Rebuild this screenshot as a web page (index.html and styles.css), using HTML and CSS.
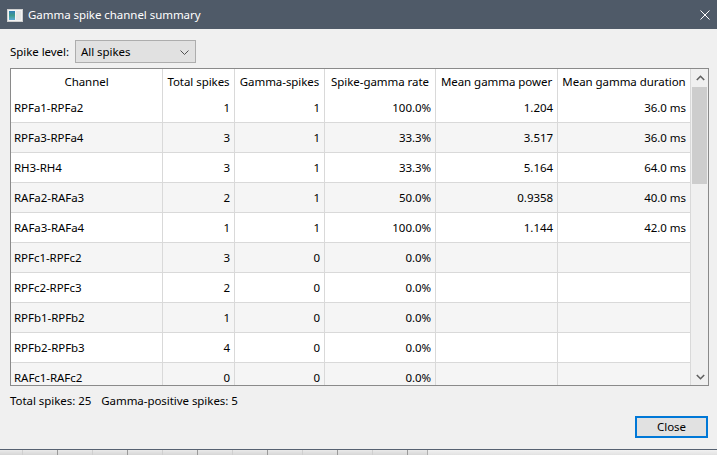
FILE: index.html
```html
<!DOCTYPE html>
<html lang="en">
<head>
<meta charset="utf-8">
<title>Gamma spike channel summary</title>
<link rel="stylesheet" href="styles.css">
</head>
<body>
<div class="window">
  <div class="titlebar">
    <svg class="app-icon" width="16" height="13" viewBox="0 0 16 13">
      <defs>
        <linearGradient id="g" x1="0" y1="0" x2="0" y2="1">
          <stop offset="0" stop-color="#2f7fb8"/>
          <stop offset="0.5" stop-color="#3f9a8c"/>
          <stop offset="1" stop-color="#5aa9d6"/>
        </linearGradient>
      </defs>
      <rect x="0.5" y="0.5" width="15" height="12" fill="#f4f4f4" stroke="#d0d0d0"/>
      <rect x="2" y="2" width="6" height="9" fill="url(#g)"/>
      <rect x="9" y="2" width="5" height="9" fill="#e6e6e6"/>
    </svg>
    <span class="title">Gamma spike channel summary</span>
    <svg class="close-x" width="10" height="10" viewBox="0 0 10 10">
      <path d="M0.5 0.5 L9.5 9.5 M9.5 0.5 L0.5 9.5" stroke="#ffffff" stroke-width="1"/>
    </svg>
  </div>
  <div class="content">
    <div class="toolbar">
      <span class="label">Spike level:</span>
      <div class="combo">
        <span>All spikes</span>
        <svg class="combo-chevron" width="9" height="5" viewBox="0 0 9 5">
          <path d="M0.5 0.5 L4.5 4.5 L8.5 0.5" fill="none" stroke="#505050" stroke-width="1"/>
        </svg>
      </div>
    </div>
    <div class="table-frame">
      <div class="table">
        <div class="row header">
          <div class="cell">Channel</div>
          <div class="cell">Total spikes</div>
          <div class="cell">Gamma-spikes</div>
          <div class="cell">Spike-gamma rate</div>
          <div class="cell">Mean gamma power</div>
          <div class="cell">Mean gamma duration</div>
        </div>
        <div class="row">
          <div class="cell name">RPFa1-RPFa2</div><div class="cell num">1</div><div class="cell num">1</div><div class="cell num">100.0%</div><div class="cell num">1.204</div><div class="cell num">36.0 ms</div>
        </div>
        <div class="row alt">
          <div class="cell name">RPFa3-RPFa4</div><div class="cell num">3</div><div class="cell num">1</div><div class="cell num">33.3%</div><div class="cell num">3.517</div><div class="cell num">36.0 ms</div>
        </div>
        <div class="row">
          <div class="cell name">RH3-RH4</div><div class="cell num">3</div><div class="cell num">1</div><div class="cell num">33.3%</div><div class="cell num">5.164</div><div class="cell num">64.0 ms</div>
        </div>
        <div class="row alt">
          <div class="cell name">RAFa2-RAFa3</div><div class="cell num">2</div><div class="cell num">1</div><div class="cell num">50.0%</div><div class="cell num">0.9358</div><div class="cell num">40.0 ms</div>
        </div>
        <div class="row">
          <div class="cell name">RAFa3-RAFa4</div><div class="cell num">1</div><div class="cell num">1</div><div class="cell num">100.0%</div><div class="cell num">1.144</div><div class="cell num">42.0 ms</div>
        </div>
        <div class="row alt">
          <div class="cell name">RPFc1-RPFc2</div><div class="cell num">3</div><div class="cell num">0</div><div class="cell num">0.0%</div><div class="cell num"></div><div class="cell num"></div>
        </div>
        <div class="row">
          <div class="cell name">RPFc2-RPFc3</div><div class="cell num">2</div><div class="cell num">0</div><div class="cell num">0.0%</div><div class="cell num"></div><div class="cell num"></div>
        </div>
        <div class="row alt">
          <div class="cell name">RPFb1-RPFb2</div><div class="cell num">1</div><div class="cell num">0</div><div class="cell num">0.0%</div><div class="cell num"></div><div class="cell num"></div>
        </div>
        <div class="row">
          <div class="cell name">RPFb2-RPFb3</div><div class="cell num">4</div><div class="cell num">0</div><div class="cell num">0.0%</div><div class="cell num"></div><div class="cell num"></div>
        </div>
        <div class="row alt">
          <div class="cell name">RAFc1-RAFc2</div><div class="cell num">0</div><div class="cell num">0</div><div class="cell num">0.0%</div><div class="cell num"></div><div class="cell num"></div>
        </div>
      </div>
      <div class="scrollbar">
        <div class="arrow">
          <svg width="9" height="6" viewBox="0 0 9 6"><path d="M0.8 5 L4.5 1.3 L8.2 5" fill="none" stroke="#606060" stroke-width="1.6"/></svg>
        </div>
        <div class="track"><div class="thumb"></div></div>
        <div class="arrow">
          <svg width="9" height="6" viewBox="0 0 9 6"><path d="M0.8 1 L4.5 4.7 L8.2 1" fill="none" stroke="#606060" stroke-width="1.6"/></svg>
        </div>
      </div>
    </div>
    <div class="summary">
      <span>Total spikes: 25</span>
      <span>Gamma-positive spikes: 5</span>
    </div>
    <div class="actions">
      <button class="btn" type="button">Close</button>
    </div>
  </div>
</div>
<div class="desktop">
  <div class="desktop-left"></div>
  <div class="desktop-right"></div>
</div>
</body>
</html>
```

FILE: styles.css
```css
* { box-sizing: border-box; }

html, body {
  margin: 0;
  padding: 0;
  width: 717px;
  height: 455px;
  overflow: hidden;
  background: #f0f0f0;
  font-family: "Noto Sans", "DejaVu Sans", sans-serif;
  font-size: 11.5px;
  color: #000;
}

.window {
  height: 450px;
  display: flex;
  flex-direction: column;
  border-bottom: 1px solid #566171;
}

.titlebar {
  height: 29px;
  flex: none;
  background: #4f5a68;
  display: flex;
  align-items: center;
  padding-left: 7px;
  padding-right: 7px;
}

.app-icon { flex: none; margin-top: 1px; }

.title {
  color: #ffffff;
  margin-left: 5px;
  flex: 1;
  font-size: 11.5px;
  line-height: 16px;
  letter-spacing: -0.05px;
}

.close-x { flex: none; }

.content {
  flex: 1;
  background: #f0f0f0;
  padding: 11px 8px 0 10px;
  display: flex;
  flex-direction: column;
}

.toolbar {
  display: flex;
  align-items: center;
  height: 23px;
}

.label { margin-right: 6px; line-height: 16px; letter-spacing: -0.05px; }

.combo {
  width: 121px;
  height: 23px;
  background: #e1e1e1;
  border: 1px solid #adadad;
  display: flex;
  align-items: center;
  justify-content: space-between;
  padding: 0 6px 0 5px;
}

.combo span { line-height: 16px; letter-spacing: -0.05px; }
.combo-chevron { margin-top: 1px; }

.table-frame {
  margin-top: 5px;
  width: 699px;
  height: 318px;
  border: 1px solid #8a8a8a;
  background: #ffffff;
  display: flex;
}

.table {
  width: 680px;
  height: 316px;
  overflow: hidden;
}

.row {
  display: grid;
  grid-template-columns: 152px 72px 90px 111px 122px 133px;
  height: 30px;
  border-bottom: 1px solid #d9d9d9;
  background: #ffffff;
}

.row.alt { background: #f5f5f5; }

.row.header {
  height: 24px;
  border-bottom: none;
}

.cell {
  border-right: 1px solid #d9d9d9;
  line-height: 29px;
  white-space: nowrap;
  overflow: hidden;
  letter-spacing: -0.05px;
}

.header .cell {
  text-align: center;
  line-height: 24px;
  padding-top: 1px;
}

.cell.name { padding-left: 3px; }
.cell.num { text-align: right; padding-right: 4px; }

.scrollbar {
  width: 17px;
  height: 316px;
  background: #f0f0f0;
  display: flex;
  flex-direction: column;
}

.arrow {
  height: 17px;
  flex: none;
  display: flex;
  align-items: center;
  justify-content: center;
  padding-left: 1px;
}

.track {
  flex: 1;
  padding: 1px 1px 0 1px;
}

.thumb {
  height: 97px;
  background: #cdcdcd;
}

.summary {
  margin-top: 7px;
  line-height: 16px;
  display: flex;
  gap: 10px;
  letter-spacing: -0.05px;
}

.actions {
  margin-top: 7px;
  display: flex;
  justify-content: flex-end;
  padding-right: 1px;
}

.btn {
  width: 73px;
  height: 22px;
  border: 2px solid #0078d7;
  background: #e1e1e1;
  font-family: inherit;
  font-size: 11.5px;
  color: #000;
  padding: 0;
  line-height: 16px;
}

.desktop {
  height: 5px;
  display: flex;
}

.desktop-left {
  width: 427px;
  background:
    repeating-linear-gradient(to right,
      transparent 0 22px, #cfcfcf 22px 23px,
      transparent 23px 57px, #9a9a9a 57px 58px,
      transparent 58px 70px),
    linear-gradient(#eaeaea, #d6d6d6);
}

.desktop-right {
  flex: 1;
  background: linear-gradient(#f2f2f2, #e2e2e2);
  border-left: 1px solid #b0b0b0;
}
```
